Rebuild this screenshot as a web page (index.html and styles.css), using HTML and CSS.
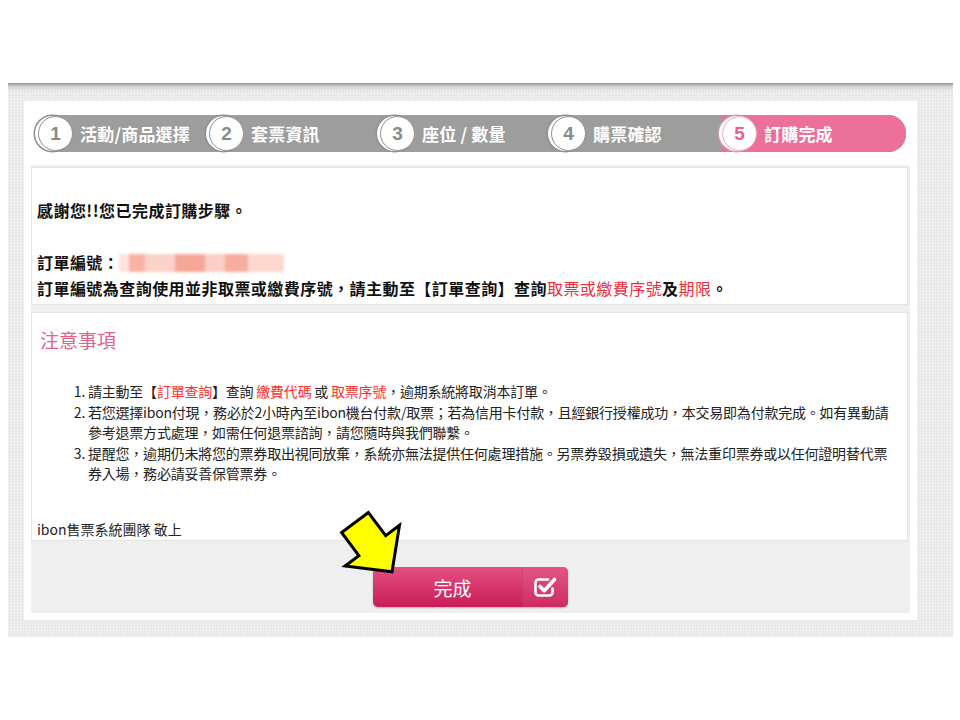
FILE: index.html
```html
<!DOCTYPE html>
<html lang="zh-Hant">
<head>
<meta charset="utf-8">
<title>訂購完成</title>
<link rel="stylesheet" href="styles.css">
</head>
<body>
<div class="page">
  <div class="card">
    <div class="steps">
      <div class="step"><span class="num">1</span><span class="label">活動/商品選擇</span></div>
      <div class="step"><span class="num">2</span><span class="label">套票資訊</span></div>
      <div class="step"><span class="num">3</span><span class="label">座位 / 數量</span></div>
      <div class="step"><span class="num">4</span><span class="label">購票確認</span></div>
      <div class="step active"><span class="num">5</span><span class="label">訂購完成</span></div>
    </div>
    <div class="content">
      <div class="box box-thanks">
        <p class="line">感謝您!!您已完成訂購步驟。</p>
        <p class="line gap">訂單編號：<span class="blur"></span></p>
        <p class="line">訂單編號為查詢使用並非取票或繳費序號，請主動至【訂單查詢】查詢<span class="red">取票或繳費序號</span>及<span class="red">期限</span>。</p>
      </div>
      <div class="box box-notes">
        <h2 class="notes-title">注意事項</h2>
        <ol class="notes">
          <li>請主動至【<span class="red">訂單查詢</span>】查詢 <span class="red">繳費代碼</span> 或 <span class="red">取票序號</span>，逾期系統將取消本訂單。</li>
          <li>若您選擇ibon付現，務必於2小時內至ibon機台付款/取票；若為信用卡付款，且經銀行授權成功，本交易即為付款完成。如有異動請<br>參考退票方式處理，如需任何退票諮詢，請您隨時與我們聯繫。</li>
          <li>提醒您，逾期仍未將您的票券取出視同放棄，系統亦無法提供任何處理措施。另票券毀損或遺失，無法重印票券或以任何證明替代票<br>券入場，務必請妥善保管票券。</li>
        </ol>
        <p class="sign">ibon售票系統團隊 敬上</p>
      </div>
      <div class="actions">
        <button class="btn-done" type="button">
          <span class="btn-text">完成</span>
          <span class="btn-icon">
            <svg width="25" height="22" viewBox="0 0 25 22" aria-hidden="true">
              <path d="M15 3.5H5.5a3 3 0 0 0-3 3v10a3 3 0 0 0 3 3h11a3 3 0 0 0 3-3v-4" fill="none" stroke="#fff" stroke-width="2.6" stroke-linecap="round"/>
              <path d="M7 10.5l4.2 4.2L21.5 3.5" fill="none" stroke="#fff" stroke-width="3.6" stroke-linecap="round" stroke-linejoin="round"/>
            </svg>
          </span>
        </button>
        <svg class="arrow" width="66" height="68" viewBox="0 0 66 68" aria-hidden="true">
          <polygon points="30.4,4.5 3.6,24.5 20.9,47.6 7.1,58 54,63.8 61.5,17.2 47.7,27.6" fill="#ffff00" stroke="#000" stroke-width="3" stroke-linejoin="miter"/>
        </svg>
      </div>
    </div>
  </div>
</div>
</body>
</html>
```
FILE: styles.css
```css
* { box-sizing: border-box; }

html, body {
  margin: 0;
  padding: 0;
  background: #fff;
}

body {
  font-family: "Noto Sans CJK TC", "Noto Sans", "Liberation Sans", sans-serif;
  color: #111;
}

.page {
  width: 945px;
  height: 554px;
  margin: 83px 0 0 8px;
  padding: 18px 35px 17px 16px;
  background-color: #e7e7e7;
  background-image:
    linear-gradient(#8d8d8d 0, #bdbdbd 2px, #dcdcdc 5px, rgba(231,231,231,0) 9px),
    repeating-linear-gradient(90deg, rgba(255,255,255,0.35) 0 1px, rgba(0,0,0,0) 1px 3px),
    repeating-linear-gradient(0deg, rgba(255,255,255,0.25) 0 1px, rgba(0,0,0,0) 1px 3px);
}

.card {
  width: 893px;
  height: 519px;
  background: #fff;
  padding: 14px 7px 7px 7px;
  display: flex;
  flex-direction: column;
}

/* steps */
.steps {
  display: flex;
  height: 37px;
  margin: 0 4px 0 3px;
  padding-left: 4px;
  background: #9d9d9d;
  border-radius: 18px;
}

.step {
  flex: none;
  width: 171px;
  display: flex;
  align-items: center;
}

.step.active {
  flex: 1;
  background: #ec709a;
  border-radius: 0 18px 18px 0;
}

.num {
  flex: none;
  width: 35px;
  height: 35px;
  border-radius: 50%;
  background: #fff;
  border: 1.5px solid #8e8e8e;
  box-shadow: -3px 0 0 0 #fff, -3px 0 0 1.5px #8e8e8e;
  display: flex;
  align-items: center;
  justify-content: center;
  font-family: "Liberation Sans", Arial, sans-serif;
  font-weight: 700;
  font-size: 19px;
  color: #8a8a8a;
}

.step.active .num {
  color: #e6628e;
  border-color: #f0a6be;
  box-shadow: -3px 0 0 0 #fff, -3px 0 0 1.5px #c9a1ae;
}

.label {
  margin-left: 7px;
  color: #fff;
  font-size: 17px;
  font-weight: 700;
  letter-spacing: 0.2px;
  white-space: nowrap;
}

/* content */
.content {
  margin-top: 13px;
  flex: 1;
  background: #efefef;
  padding: 2px 2px 0 0;
  display: flex;
  flex-direction: column;
}

.box {
  background: #fff;
  border: 1px solid #e4e4e4;
}

.box-thanks {
  height: 138px;
  padding: 29px 6px 3px 5px;
}

.line {
  margin: 0;
  font-size: 16px;
  font-weight: 700;
  line-height: 26px;
  letter-spacing: 0.45px;
  white-space: nowrap;
}

.line.gap {
  margin-top: 26px;
}

.red { color: #ee2d3a; }

.line .red { font-weight: 400; }

.blur {
  display: inline-block;
  width: 165px;
  height: 18px;
  vertical-align: -3px;
  background: linear-gradient(90deg,
    #fde3dd 0 6%, #f7b2a4 6% 16%, #fbd2c8 16% 34%, #f6a797 34% 52%,
    #fbcfc5 52% 64%, #f7ad9e 64% 78%, #fcd8cf 78% 100%);
  filter: blur(1.5px);
}

.box-notes {
  margin-top: 7px;
  height: 229px;
  padding: 13px 6px 2px 5px;
}

.notes-title {
  margin: 0 0 0 3px;
  font-size: 19px;
  line-height: 28px;
  font-weight: 400;
  color: #e2628c;
}

.notes {
  margin: 27px 0 0 0;
  padding-left: 51px;
  font-size: 14px;
  line-height: 20.5px;
  letter-spacing: -0.22px;
  color: #222;
  white-space: nowrap;
}

.notes .red { color: #ff3030; }

.sign {
  margin: 35px 0 0 0;
  font-size: 14px;
  line-height: 20px;
  color: #222;
}

/* actions */
.actions {
  position: relative;
  flex: 1;
  display: flex;
  justify-content: center;
  align-items: flex-start;
  padding-top: 26px;
}

.btn-done {
  display: flex;
  width: 195px;
  height: 40px;
  margin-left: 2px;
  padding: 0;
  border: 0;
  border-radius: 5px;
  overflow: hidden;
  background: linear-gradient(#e54f82, #c81d58);
  box-shadow: 0 1px 2px rgba(0, 0, 0, 0.25);
  cursor: pointer;
  font-family: inherit;
}

.btn-text {
  flex: 1;
  display: flex;
  align-items: center;
  justify-content: center;
  padding-left: 10px;
  color: #fff;
  font-size: 19px;
}

.btn-icon {
  flex: none;
  width: 46px;
  display: flex;
  align-items: center;
  justify-content: center;
  background: linear-gradient(#e25684, #cd2c62);
  border-left: 1px solid rgba(120, 0, 40, 0.12);
}

.arrow {
  position: absolute;
  left: 307px;
  top: -33px;
}
```
